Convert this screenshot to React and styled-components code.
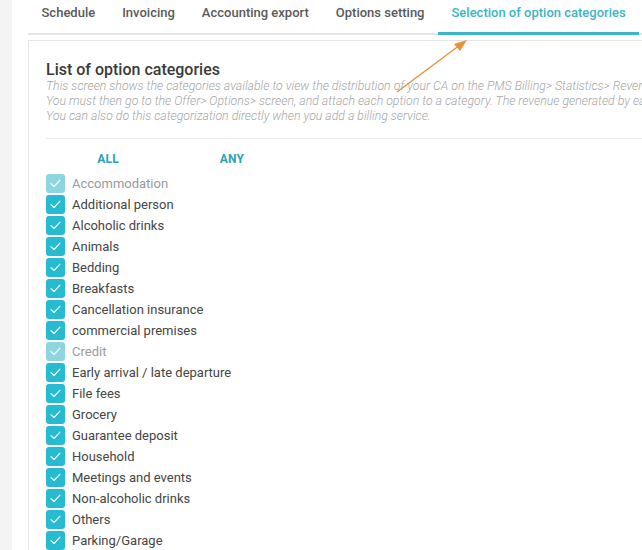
import React from 'react'
import styled, { createGlobalStyle } from 'styled-components'

const tabs = ['Schedule', 'Invoicing', 'Accounting export', 'Options setting', 'Selection of option categories']

const categories = [
    { label: 'Accommodation', disabled: true },
    { label: 'Additional person' },
    { label: 'Alcoholic drinks' },
    { label: 'Animals' },
    { label: 'Bedding' },
    { label: 'Breakfasts' },
    { label: 'Cancellation insurance' },
    { label: 'commercial premises' },
    { label: 'Credit', disabled: true },
    { label: 'Early arrival / late departure' },
    { label: 'File fees' },
    { label: 'Grocery' },
    { label: 'Guarantee deposit' },
    { label: 'Household' },
    { label: 'Meetings and events' },
    { label: 'Non-alcoholic drinks' },
    { label: 'Others' },
    { label: 'Parking/Garage' },
]

function Check() {
    return (
        <svg width="11" height="9" viewBox="0 0 11 9" fill="none">
            <path d="M1 4.6 L4 7.5 L10 1.2" stroke="white" strokeWidth="1.1" strokeLinecap="round" strokeLinejoin="round" />
        </svg>
    )
}

export default function App() {
    return (
        <>
            <GlobalStyle />
            <Page>
                <Strip />
                <Main>
                    <TabBar>
                        <TabList>
                            {tabs.map((t, i) => (
                                <Tab key={t} active={i === tabs.length - 1}>{t}</Tab>
                            ))}
                        </TabList>
                    </TabBar>
                    <Card>
                        <Title>List of option categories</Title>
                        <Description>
                            <Line>This screen shows the categories available to view the distribution of your CA on the PMS Billing&gt; Statistics&gt; Revenue screen.</Line>
                            <Line>You must then go to the Offer&gt; Options&gt; screen, and attach each option to a category. The revenue generated by each option will be counted.</Line>
                            <Line>You can also do this categorization directly when you add a billing service.</Line>
                        </Description>
                        <Divider />
                        <Actions>
                            <ActionButton>ALL</ActionButton>
                            <ActionButton>ANY</ActionButton>
                        </Actions>
                        <List>
                            {categories.map(c => (
                                <Item key={c.label}>
                                    <Box disabled={c.disabled}><Check /></Box>
                                    <Label disabled={c.disabled}>{c.label}</Label>
                                </Item>
                            ))}
                        </List>
                    </Card>
                </Main>
                <Arrow width="90" height="70" viewBox="0 0 90 70">
                    <line x1="6" y1="60" x2="69" y2="13" stroke="#e8913b" strokeWidth="1.4" />
                    <polygon points="76,8 63,12 69,19" fill="#e8913b" />
                </Arrow>
            </Page>
        </>
    )
}

const GlobalStyle = createGlobalStyle`
html, body {
    margin: 0;
    padding: 0;
    background: #ffffff;
    overflow: hidden;
}
body {
    font-family: Roboto, "Liberation Sans", Arial, sans-serif;
}
`

const Page = styled.div`
position: relative;
display: flex;
width: 100vw;
height: 100vh;
overflow: hidden;
`

const Strip = styled.div`
width: 12px;
flex-shrink: 0;
background: #f4f4f4;
`

const Main = styled.div`
flex: 1;
min-width: 0;
padding-left: 16px;
`

const TabBar = styled.div`
border-bottom: 2px solid #e3e5e8;
margin-right: -20px;
`

const TabList = styled.div`
display: flex;
margin-bottom: -2px;
`

const Tab = styled.div`
padding: 4px 13.5px 10px;
line-height: 18px;
font-size: 13px;
font-weight: 500;
white-space: nowrap;
color: ${props => props.active ? '#3cb4c6' : '#595959'};
border-bottom: 3px solid ${props => props.active ? '#3cb6c6' : 'transparent'};
`

const Card = styled.div`
margin-top: 5px;
margin-right: -60px;
border: 1px solid #e6e6e6;
border-bottom: none;
padding: 20px 0 0 17px;
`

const Title = styled.h2`
margin: 0;
font-size: 16px;
line-height: 18px;
font-weight: 500;
color: #3a3a3a;
`

const Description = styled.div`
font-size: 12.3px;
line-height: 15px;
font-style: italic;
font-weight: 300;
color: #a5a5a5;
`

const Line = styled.div`
white-space: nowrap;
`

const Divider = styled.div`
height: 1px;
background: #ebebeb;
margin-top: 14px;
`

const Actions = styled.div`
display: flex;
margin-top: 10px;
`

const ActionButton = styled.div`
width: 124px;
text-align: center;
font-size: 12px;
line-height: 20px;
font-weight: 700;
color: #2aa3b8;
letter-spacing: 0.2px;
`

const List = styled.div`
margin-top: 4px;
`

const Item = styled.div`
display: flex;
align-items: center;
height: 21px;
`

const Box = styled.div`
width: 19px;
height: 19px;
border-radius: 3px;
display: flex;
align-items: center;
justify-content: center;
background: ${props => props.disabled ? '#8fd5e0' : '#27bbd1'};
`

const Label = styled.span`
margin-left: 7px;
font-size: 13px;
color: ${props => props.disabled ? '#9a9a9a' : '#454545'};
`

const Arrow = styled.svg`
position: absolute;
left: 391px;
top: 32px;
pointer-events: none;
`
